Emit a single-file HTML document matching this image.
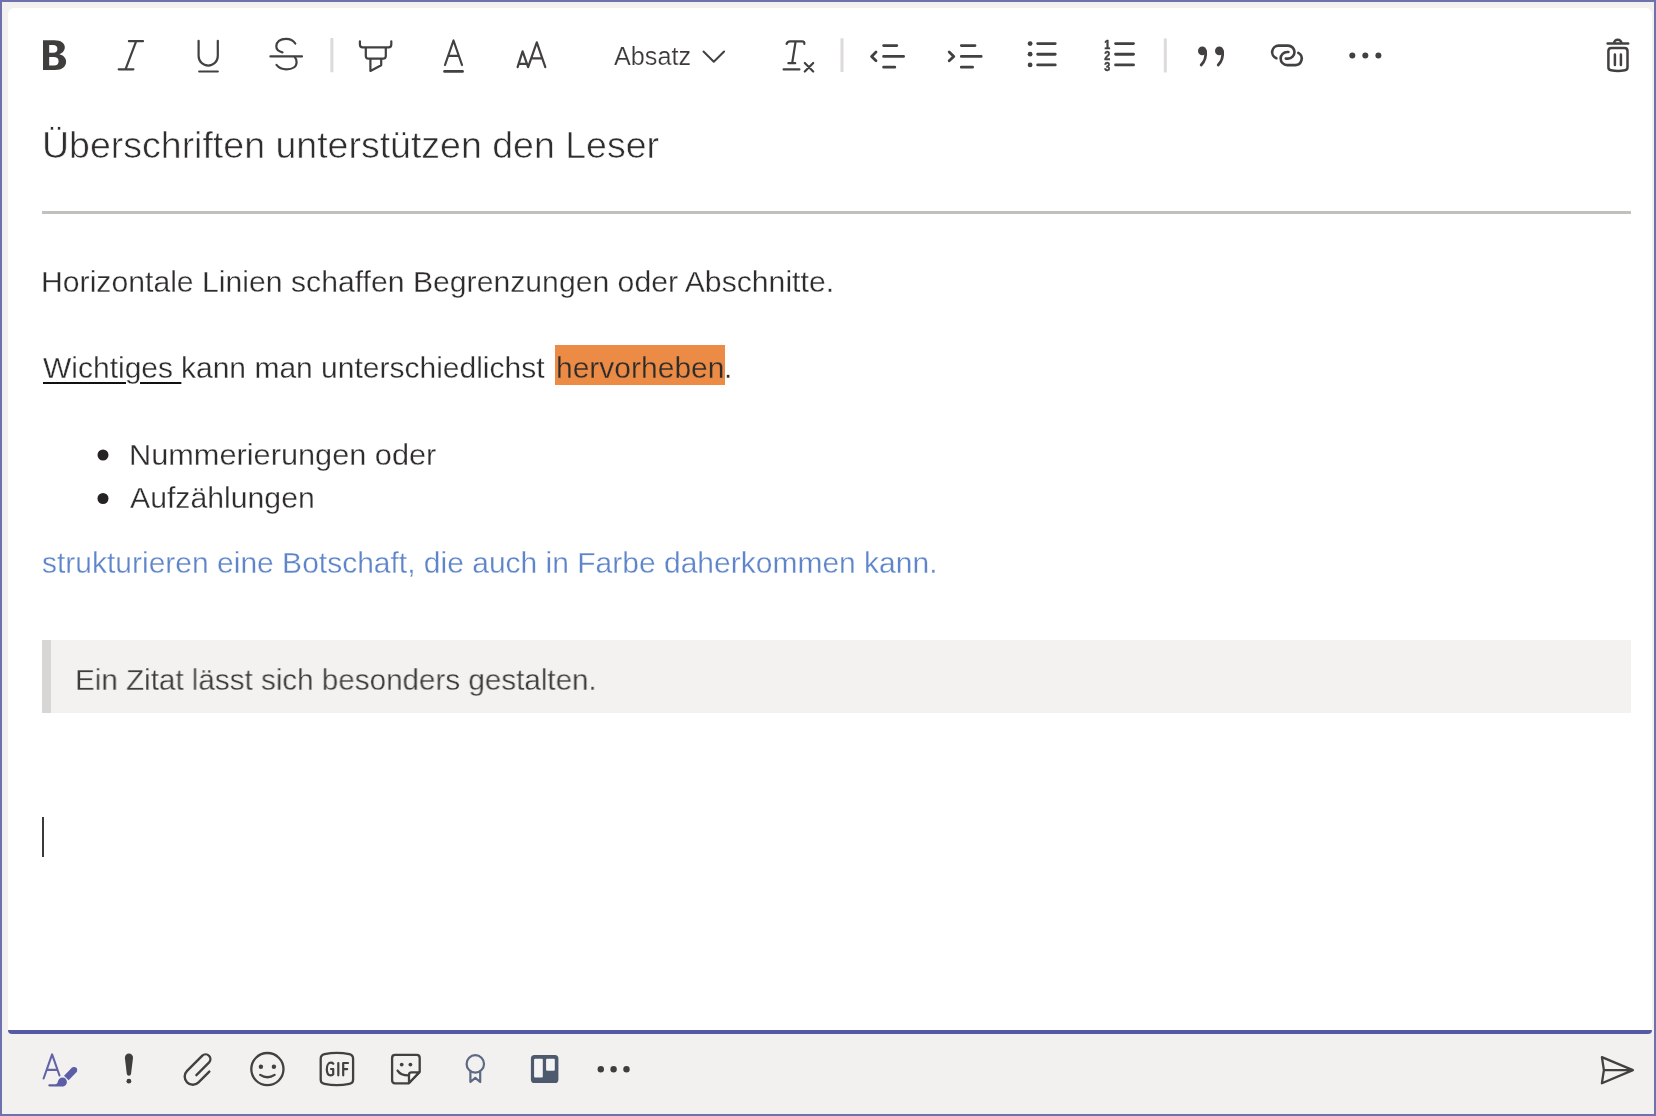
<!DOCTYPE html>
<html><head><meta charset="utf-8">
<style>
html,body{margin:0;padding:0;}
body{width:1656px;height:1116px;position:relative;overflow:hidden;background:#f2f1ef;font-family:"Liberation Sans",sans-serif;}
.frame{position:absolute;left:0;top:0;width:1652px;height:1112px;border:2px solid #6f71ad;}
.panel{position:absolute;left:8px;top:8px;width:1644px;height:1022px;background:#fff;border-radius:6px 6px 0 0;}
.bar{position:absolute;left:8px;top:1030px;width:1644px;height:4px;background:#5659a3;border-radius:0 0 4px 4px;}
.t{position:absolute;white-space:pre;font-size:30px;line-height:43px;color:#2d2c2b;transform-origin:0 0;-webkit-text-stroke:0.3px #fff;will-change:transform;}
.hr{position:absolute;left:42px;top:211px;width:1589px;height:3px;background:#c2c0bd;}
.quote{position:absolute;left:42px;top:640px;width:1589px;height:73px;background:#f3f2f1;}
.quote i{position:absolute;left:0;top:0;width:9px;height:73px;background:#d8d6d5;}
.caret{position:absolute;left:42px;top:817px;width:2px;height:40px;background:#3a3a3a;}
.hl{position:absolute;left:554.6px;top:345.3px;width:170.1px;height:39.8px;background:#ec8b45;}
svg{position:absolute;left:0;top:0;}
</style></head>
<body>
<div class="frame"></div>
<div class="panel"></div>
<div class="bar"></div>

<div class="t" style="left:41.5px;top:120px;font-size:37.5px;line-height:50px;color:#2f2e2d;-webkit-text-stroke:0.6px #fff;">Überschriften unterstützen den Leser</div>
<div class="hr"></div>
<div class="t" style="left:41px;top:260px;transform:scaleX(1.006);">Horizontale Linien schaffen Begrenzungen oder Abschnitte.</div>
<div class="hl"></div>
<div class="t" style="left:42.5px;top:346px;"><span style="text-decoration:underline;text-decoration-color:#111;text-decoration-thickness:2.4px;text-underline-offset:4px;">Wichtiges </span></div>
<div class="t" style="left:181.3px;top:346px;">kann man unterschiedlichst</div>
<div class="t" style="left:555.5px;top:346px;color:#2d2c2b;-webkit-text-stroke:0.3px #ec8b45;">hervorheben</div>
<div class="t" style="left:724px;top:346px;">.</div>
<div class="t" style="left:128.5px;top:433px;transform:scaleX(1.024);">Nummerierungen oder</div>
<div class="t" style="left:129.5px;top:476px;transform:scaleX(1.007);">Aufzählungen</div>
<div class="t" style="left:42px;top:541px;color:#5e85ca;">strukturieren eine Botschaft, die auch in Farbe daherkommen kann.</div>
<div class="quote"><i></i></div>
<div class="t" style="left:75px;top:658px;color:#3f3d3b;-webkit-text-stroke:0.3px #f3f2f1;transform:scaleX(0.987);">Ein Zitat lässt sich besonders gestalten.</div>
<div class="caret"></div>
<div class="t" style="left:613.5px;top:38.3px;font-size:25.2px;line-height:36px;color:#3b3a39;-webkit-text-stroke:0.2px #fff;">Absatz</div>

<svg width="1656" height="1116" viewBox="0 0 1656 1116">
<!-- list bullets -->
<circle cx="103" cy="455" r="5.5" fill="#252423"/>
<circle cx="103" cy="498.5" r="5.5" fill="#252423"/>

<g fill="none" stroke="#424140" stroke-width="2.2" stroke-linecap="round" stroke-linejoin="round">
 <!-- Bold -->
 <path fill="#403e3c" stroke="none" fill-rule="evenodd" d="M43,40.2 H54.5 C60.8,40.2 64.8,43 64.8,47.3 C64.8,50.6 62.6,53.2 59.3,54.2 C63.5,55 66.1,58 66.1,61.6 C66.1,67 61.8,70.1 55.2,70.1 H43 Z M49.2,44.9 V52.8 H53.3 C56,52.8 57.4,51.3 57.4,48.8 C57.4,46.2 55.8,44.9 53,44.9 Z M49.2,57 V65.6 H54 C57,65.6 58.6,64 58.6,61.2 C58.6,58.4 56.8,57 53.6,57 Z"/>
 <!-- Italic -->
 <path d="M128.9,41.2 H143 M118.7,69.3 H133.4 M136.2,41.2 L125.5,69.3"/>
 <!-- Underline -->
 <path d="M198.6,40.8 V56 A9.6,9.6 0 0 0 217.8,56 V40.8 M199.2,71.5 H217.8"/>
 <!-- Strikethrough -->
 <path d="M270.4,56.4 H302 M295.3,43.5 C293,40 289.5,38.8 286,38.8 C280,38.8 276.3,42 276.3,46.3 C276.3,49.5 278.6,51.5 282.5,52.3 M294.5,57 C296,58.3 296.6,60.2 296.6,62.2 C296.6,66.6 292.5,69.4 286.5,69.4 C282,69.4 278.7,67.7 276.5,64.9"/>
 <!-- Highlighter -->
 <path d="M359.9,41.3 V44.5 Q359.9,47.3 362.6,47.3 H388.6 Q391.3,47.3 391.3,44.5 V41.3 M365.8,47.3 V56 Q365.8,58.6 368.4,58.6 H383.2 Q385.8,58.6 385.8,56 V47.3 M370.4,58.6 V71 L381.2,65.2 V58.6"/>
 <!-- Font color A -->
 <path d="M445,65 L453.5,40.5 L462,65 M448.3,55.9 H458.7"/>
 <path d="M444.5,71.4 H462.6" stroke-width="2.6"/>
 <!-- Font size AA -->
 <path d="M517.6,67.2 L522.6,51.3 L528.1,67.2 L536.8,42.4 L545.3,67.2 M519.2,63.8 H526.6 M531.4,58.3 H542"/>
 <!-- chevron -->
 <path d="M703.5,51.5 L713.8,61.8 L724.1,51.5" stroke-width="2"/>
 <!-- Clear formatting Tx -->
 <path d="M786.6,44 Q787.2,41.3 790,41.3 H802 Q804.8,41.3 804.3,44 M795.6,41.5 L792.2,63 M788.4,63.2 H795.2 M783.6,69.4 H799.4 M804.8,63 L813.2,71.5 M813.2,63 L804.8,71.5"/>
 <!-- Outdent -->
 <path stroke-width="2.8" d="M876,52 L871.6,56.4 L876,60.8 M883.6,45.6 H896.8 M883.6,56.4 H903.6 M883.6,67.2 H894.8"/>
 <!-- Indent -->
 <path stroke-width="2.8" d="M949.2,52 L953.8,56.4 L949.2,60.8 M961.3,45.6 H975 M961.3,56.4 H981.2 M961.3,67.2 H972.6"/>
 <!-- bullet list -->
 <path stroke-width="2.9" d="M1037.7,43.6 H1055.2 M1037.7,54.2 H1055.2 M1037.7,64.9 H1055.2"/>
 <circle cx="1030.1" cy="43.6" r="2.4" fill="#424140" stroke="none"/>
 <circle cx="1030.1" cy="54.2" r="2.4" fill="#424140" stroke="none"/>
 <circle cx="1030.1" cy="64.9" r="2.4" fill="#424140" stroke="none"/>
 <!-- numbered list -->
 <path stroke-width="2.9" d="M1115.6,43.6 H1133.5 M1115.6,54.2 H1133.5 M1115.6,64.9 H1133.5"/>
 <g stroke="#424140" stroke-width="0.5" fill="#424140" font-family="Liberation Sans" font-weight="700" font-size="12.5">
  <text x="1104.3" y="49.3" textLength="6" lengthAdjust="spacingAndGlyphs">1</text>
  <text x="1104.3" y="60" textLength="6" lengthAdjust="spacingAndGlyphs">2</text>
  <text x="1104.3" y="70.6" textLength="6" lengthAdjust="spacingAndGlyphs">3</text>
 </g>
 <!-- quote -->
 <circle cx="1202.3" cy="50.9" r="4.3" fill="#424140" stroke="none"/>
 <path stroke-width="2.8" d="M1205.6,51.5 C1206.2,57 1204.5,61.6 1201.2,65"/>
 <circle cx="1219.3" cy="50.9" r="4.3" fill="#424140" stroke="none"/>
 <path stroke-width="2.8" d="M1222.6,51.5 C1223.2,57 1221.5,61.6 1218.2,65"/>
 <!-- link -->
 <path stroke-width="2.6" d="M1276.4,58.2 A6.5,6.5 0 0 1 1278.6,45.6 H1288 A6.5,6.5 0 0 1 1288,58.6 H1285.8 M1288.4,52 H1287.2 A6.55,6.55 0 0 0 1287.2,65.1 H1295.2 A6.55,6.55 0 0 0 1298.3,52.8"/>
 <!-- more -->
 <circle cx="1352.3" cy="55.6" r="3" fill="#424140" stroke="none"/>
 <circle cx="1365.3" cy="55.6" r="3" fill="#424140" stroke="none"/>
 <circle cx="1378.4" cy="55.6" r="3" fill="#424140" stroke="none"/>
 <!-- trash -->
 <path stroke-width="2.5" d="M1607.6,43.5 H1628.2 M1613.9,43.5 A3.85,3.85 0 0 1 1621.6,43.5 M1608.4,51 Q1608.4,48 1611.4,48 H1624.5 Q1627.5,48 1627.5,51 V67.2 Q1627.5,69.8 1624.8,70.3 Q1618,71.6 1611.1,70.3 Q1608.4,69.8 1608.4,67.2 Z M1614.9,54.5 V64.9 M1620.9,54.5 V64.9"/>
 <!-- separators -->
 <path stroke="#dddbd9" stroke-width="3" stroke-linecap="butt" d="M331.9,38 V72.3 M842,38.3 V72 M1165.3,38.5 V72.4"/>
</g>

<!-- bottom toolbar -->
<g fill="none" stroke="#424140" stroke-width="2.3" stroke-linecap="round" stroke-linejoin="round">
 <!-- format -->
 <path stroke="#6264a7" stroke-width="2.1" d="M43.6,1078.5 L52.1,1054.4 L59.5,1075.5 M47.6,1069.9 H56.6"/>
 <path stroke="#5b5ea6" stroke-width="6.4" stroke-linecap="butt" d="M66.3,1078 L73.2,1070.9"/>
 <circle cx="74" cy="1070.1" r="3.2" fill="#5b5ea6" stroke="none"/>
 <path fill="#5b5ea6" stroke="none" d="M49.5,1084.2 H55.2 C56.8,1084.2 57.6,1083 57.9,1081.4 C58.3,1079.1 60.2,1077.4 62.5,1077.4 C65,1077.4 66.9,1079.4 66.9,1081.9 C66.9,1084.5 64.8,1086.5 62.2,1086.5 H49.5 C48.8,1086.5 48.3,1085.9 48.3,1085.35 C48.3,1084.7 48.8,1084.2 49.5,1084.2 Z"/>
 <!-- exclamation -->
 <path fill="#403e3c" stroke="none" d="M124.9,1058 C124.9,1055.4 126.7,1053.6 128.9,1053.6 C131.1,1053.6 133.1,1055.4 133,1058 L131,1073.8 C130.8,1075 130,1075.8 128.9,1075.8 C127.8,1075.8 127,1075 126.8,1073.8 Z"/>
 <circle cx="128.9" cy="1081.2" r="2.4" fill="#403e3c" stroke="none"/>
 <!-- paperclip -->
 <path stroke-width="2.4" d="M196.4,1075.2 L209.12,1062.36 A4.8,4.8 0 0 0 202.34,1055.58 L187.07,1070.87 A8.1,8.1 0 0 0 198.53,1082.33 L209.3,1071.56"/>
 <!-- smiley -->
 <circle cx="267.4" cy="1069.1" r="16.1"/>
 <circle cx="260.9" cy="1066.7" r="2.2" fill="#424140" stroke="none"/>
 <circle cx="273.9" cy="1066.7" r="2.2" fill="#424140" stroke="none"/>
 <path d="M260.2,1074.9 Q267.4,1079.6 274.6,1074.9"/>
 <!-- GIF -->
 <path d="M324.5,1054.2 Q336.9,1051.6 349.3,1054.2 Q353.1,1055 353.1,1058.8 V1079.4 Q353.1,1083.1 349.3,1083.8 Q336.9,1086.4 324.5,1083.8 Q320.7,1083.1 320.7,1079.4 V1058.8 Q320.7,1055 324.5,1054.2 Z"/>
 <path stroke-width="2.2" d="M333.3,1063.7 C332.7,1063 331.9,1062.7 330.9,1062.7 C328.5,1062.7 326.8,1065.4 326.8,1069.2 C326.8,1073 328.4,1075.3 330.8,1075.3 C331.9,1075.3 332.8,1074.9 333.2,1074.4 V1069 H331 M338.3,1063 V1075.3 M343.2,1075.3 V1063 H348 M343.2,1069.1 H347.2"/>
 <!-- sticker -->
 <path d="M395.1,1054.9 H416.7 Q419.7,1054.9 419.7,1057.9 V1071.8 L408.8,1083.3 H395.1 Q392.1,1083.3 392.1,1080.3 V1057.9 Q392.1,1054.9 395.1,1054.9 Z"/>
 <path fill="#fff" d="M409,1083 V1074.9 Q409,1072.4 411.5,1072.4 H419.2 Z"/>
 <circle cx="401.7" cy="1064.6" r="1.9" fill="#424140" stroke="none"/>
 <circle cx="410.4" cy="1064.6" r="1.9" fill="#424140" stroke="none"/>
 <path d="M397.6,1070.6 C399.5,1073.8 403,1075.4 408.5,1075.4"/>
 <!-- praise -->
 <g stroke="#5b6982" stroke-width="2.2">
  <circle cx="475.3" cy="1063.9" r="8.7"/>
  <path d="M470.4,1071.4 V1082 L475.3,1077.8 L480.2,1082 V1071.4"/>
 </g>
 <!-- planner -->
 <rect x="530.9" y="1055.1" width="27.5" height="27.9" rx="3.6" fill="#4d596d" stroke="none"/>
 <rect x="534.1" y="1058.8" width="8.7" height="18.8" rx="1" fill="#f4f4f4" stroke="none"/>
 <rect x="546.1" y="1058.8" width="8.7" height="11.9" rx="1" fill="#f4f4f4" stroke="none"/>
 <!-- more -->
 <circle cx="600.8" cy="1069.3" r="3.2" fill="#403e3c" stroke="none"/>
 <circle cx="613.6" cy="1069.3" r="3.2" fill="#403e3c" stroke="none"/>
 <circle cx="626.5" cy="1069.3" r="3.2" fill="#403e3c" stroke="none"/>
 <!-- send -->
 <path stroke-width="2.3" d="M1601.9,1057.1 L1632.9,1070.1 L1601.9,1083.2 L1603.9,1070.1 Z M1603.9,1070.1 H1632.9"/>
</g>
</svg>
</body></html>
